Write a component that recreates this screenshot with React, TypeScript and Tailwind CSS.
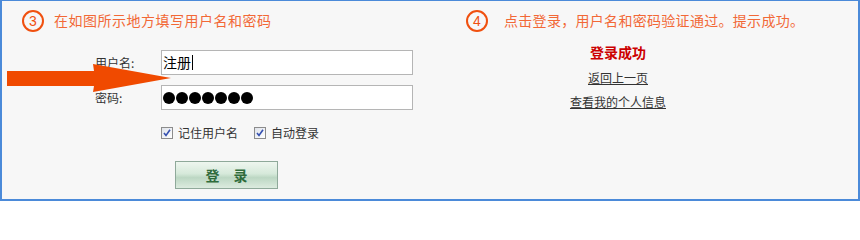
import React from 'react'

const FONT = "font-['Noto_Sans_CJK_SC','Noto_Sans',sans-serif]"

function StepCircle({ n }: { n: string }) {
  return (
    <span className="flex h-[22px] w-[22px] items-center justify-center rounded-full border-2 border-[#f0500f] text-[14px] leading-none text-[#f0500f] font-['Liberation_Sans',sans-serif]">
      {n}
    </span>
  )
}

function Check({ label }: { label: string }) {
  return (
    <label className="flex items-center gap-[5px] text-[12px] leading-none text-[#333]">
      <span className="flex h-[12px] w-[12px] items-center justify-center border border-[#8c8c8c] bg-gradient-to-br from-[#dfe3ea] to-[#ffffff]">
        <svg width="8" height="8" viewBox="0 0 8 8">
          <path d="M1 4 L3 6.5 L7 0.8" fill="none" stroke="#3550b0" strokeWidth="1.6" />
        </svg>
      </span>
      {label}
    </label>
  )
}

export default function App() {
  return (
    <div className={`relative h-[201px] w-[860px] overflow-hidden border-x-2 border-t border-b-2 border-[#4b8ad9] bg-[#f7f7f7] ${FONT}`}>
      {/* step headers */}
      <div className="flex h-[39px] items-center">
        <div className="flex w-[428px] items-center gap-[10px] pl-[20px]">
          <StepCircle n="3" />
          <span className="text-[14px] tracking-[0.5px] text-[#f26836]">在如图所示地方填写用户名和密码</span>
        </div>
        <div className="flex items-center gap-[16px] pl-[36px]">
          <StepCircle n="4" />
          <span className="text-[14px] tracking-[0.3px] text-[#f26836]">点击登录，用户名和密码验证通过。提示成功。</span>
        </div>
      </div>

      <div className="flex">
        {/* login form */}
        <div className="w-[428px] pl-[93px] pt-[10px]">
          <div className="flex items-center">
            <span className="w-[66px] text-[12px] text-[#333]">用户名:</span>
            <div className="flex h-[25px] w-[252px] items-center border border-[#b5b5b5] bg-white pl-[1px] text-[14px] text-black">
              注册
              <span className="ml-px h-[15px] w-px bg-black" />
            </div>
          </div>
          <div className="mt-[10px] flex items-center">
            <span className="w-[66px] text-[12px] text-[#333]">密码:</span>
            <div className="flex h-[25px] w-[252px] items-center gap-[1px] border border-[#b5b5b5] bg-white pl-[1px]">
              {Array.from({ length: 7 }).map((_, i) => (
                <span key={i} className="h-[12px] w-[12px] rounded-full bg-black" />
              ))}
            </div>
          </div>
          <div className="ml-[66px] mt-[17px] flex items-center gap-[16px]">
            <Check label="记住用户名" />
            <Check label="自动登录" />
          </div>
          <button className="ml-[80px] mt-[22px] flex h-[28px] w-[103px] items-center justify-center border border-[#8fa99a] bg-[linear-gradient(#eef6ef,#d6e9da_45%,#bcd7c3_60%,#dcebdf)] text-[14px] font-bold text-[#2f6b3b]">
            登　录
          </button>
        </div>

        {/* success message */}
        <div className="flex w-[376px] flex-col items-center pt-[4px]">
          <span className="text-[14px] font-bold leading-[16px] text-[#cc0000]">登录成功</span>
          <a className="mt-[10px] text-[12px] leading-[16px] text-[#333] underline">返回上一页</a>
          <a className="mt-[8px] text-[12px] leading-[16px] text-[#333] underline">查看我的个人信息</a>
        </div>
      </div>

      {/* pointer arrow */}
      <svg className="absolute left-[3px] top-[61px]" width="170" height="32" viewBox="0 0 170 32">
        <polygon points="2,9 89,9 88,2 166,16 88,30 89,24 2,24" fill="#f04a00" />
      </svg>
    </div>
  )
}
